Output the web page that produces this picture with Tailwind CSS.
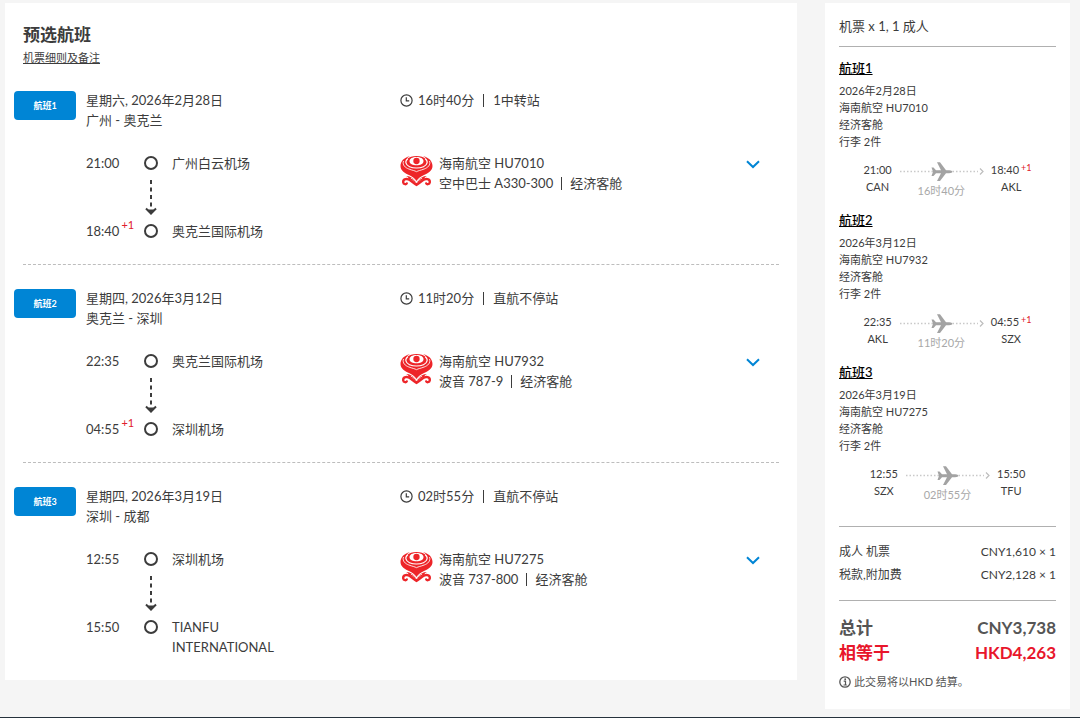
<!DOCTYPE html>
<html lang="zh-CN">
<head>
    <meta charset="UTF-8">
    <meta name="viewport" content="width=device-width, initial-scale=1.0">
    <title>预选航班</title>
    <script src="https://cdn.jsdelivr.net/npm/@tailwindcss/browser@4"></script>
</head>
<body class="min-h-screen flex flex-col bg-[#f5f5f5] font-['Lato','Noto_Sans_CJK_SC',sans-serif] text-[13px] leading-5 text-[#3c3c3c]">

<!-- Shared icons -->
<svg class="hidden" aria-hidden="true">
    <symbol id="clock" viewBox="0 0 13 13">
        <circle cx="6.5" cy="6.5" r="5.6" fill="none" stroke="currentColor" stroke-width="1.2"/>
        <path d="M6.3 3.2V6.9H9.2" fill="none" stroke="currentColor" stroke-width="1.2"/>
    </symbol>
    <symbol id="down-arrow" viewBox="0 0 14 38">
        <path d="M7 2V33" fill="none" stroke="currentColor" stroke-width="2" stroke-dasharray="4 3.5"/>
        <path d="M2 30.5L7 35.5L12 30.5" fill="none" stroke="currentColor" stroke-width="2"/>
        <path d="M4 31.5H10L7 36.5Z" fill="currentColor"/>
    </symbol>
    <symbol id="chevron" viewBox="0 0 14 9">
        <path d="M1 1.2L7 7L13 1.2" fill="none" stroke="currentColor" stroke-width="2"/>
    </symbol>
    <symbol id="hainan" viewBox="0 0 96 93">
        <path fill="#ed2529" d="M28 1C10 5 0 16 0 30C0 45 14 52 27 58C37 63 43 68 48 75C53 68 59 63 69 58C82 52 96 45 96 30C96 16 86 5 68 1C74 4 76 6 76 9C70 3 60 0 48 0C36 0 26 3 20 9C20 6 22 4 28 1Z"/>
        <path fill="#fff" d="M48 3C36 3 27 8 27 15C27 24 37 28 48 28C59 28 69 24 69 15C69 8 60 3 48 3Z"/>
        <path fill="none" stroke="#fff" stroke-width="3.5" d="M22 8C12 15 15 27 27 32C34 35 42 36 48 36C54 36 62 35 69 32C81 27 84 15 74 8"/>
        <path fill="none" stroke="#fff" stroke-width="2.5" d="M9 15C5 27 14 35 25 39C35 43 43 44 48 47C53 44 61 43 71 39C82 35 91 27 87 15"/>
        <circle cx="48" cy="15" r="9.5" fill="#ed2529"/>
        <!-- waves with a curl at each end -->
        <path fill="none" stroke="#ed2529" stroke-width="7" stroke-linecap="round" stroke-linejoin="round" d="M19 82C18 86 9 86 8 79C7 69 20 66 29 73C36 78 41 84 48 87C55 84 60 78 67 73C76 66 89 69 88 79C87 86 78 86 77 82"/>
        <path fill="#ed2529" d="M17 60C27 60 37 65 44 74L48 80L52 74C59 65 69 60 79 60C73 63 71 66 72 70C63 71 57 76 48 88C39 76 33 71 24 70C25 66 23 63 17 60Z"/>
        <path fill="none" stroke="#fff" stroke-width="2.5" d="M31 66C38 69 44 75 48 81C52 75 58 69 65 66"/>
    </symbol>
    <symbol id="plane-line" viewBox="0 0 85 20">
        <path d="M1 9.5H79" fill="none" stroke="#c9c9c9" stroke-width="1.5" stroke-dasharray="1.5 2"/>
        <path d="M81 6.5L84 9.5L81 12.5" fill="none" stroke="#bdbdbd" stroke-width="1.2"/>
        <path fill="#a3a3a3" d="M32.5 5.5H34.5L37 8.2H42L38 0.3H41L47 8.2H50C52.5 8.2 53.3 9 53.3 9.7C53.3 10.4 52.5 11.2 50 11.2H47L41 19H38L42 11.2H37L34.5 13.9H32.5L34 9.7Z"/>
    </symbol>
    <symbol id="info" viewBox="0 0 12 12">
        <circle cx="6" cy="6" r="5.2" fill="none" stroke="currentColor" stroke-width="1.3"/>
        <path d="M4.7 5.2H6.5V9M4.5 9H7.8" fill="none" stroke="currentColor" stroke-width="1.2"/>
        <circle cx="6.2" cy="3.2" r="0.9" fill="currentColor"/>
    </symbol>
</svg>

<div class="flex-1 flex items-start gap-7 pt-[3px] pl-[5px] pr-[10px]">

    <!-- Selected flights -->
    <main class="flex-1 min-w-0 bg-white px-[9px] pt-5">
        <h1 class="px-[9px] text-[17px] leading-6 font-bold">预选航班</h1>
        <p class="mt-[2px] px-[9px] text-[11px] leading-[18px]"><a href="#rules" class="underline">机票细则及备注</a></p>

        <!-- Flight 1 -->
        <section class="flex gap-[10px] py-[23px]">
            <h2 class="mt-px w-[62px] h-[29px] shrink-0 rounded bg-[#0085d5] text-center text-[9px] leading-[29px] font-bold text-white">航班1</h2>
            <div class="flex-1 grid grid-cols-[314fr_388fr] gap-y-[23px]">
                <div>
                    <p>星期六, 2026年2月28日</p>
                    <p>广州 - 奥克兰</p>
                </div>
                <p class="flex items-center self-start">
                    <svg class="w-[13px] h-[13px] mr-[5px]"><use href="#clock"/></svg>
                    <span>16时40分</span>
                    <span class="mx-[9px] h-[13px] border-l border-current"></span>
                    <span>1中转站</span>
                </p>
                <div class="grid grid-cols-[58px_14px_1fr] items-start">
                    <time>21:00</time>
                    <span class="mt-[3px] size-[14px] rounded-full border-2 border-current"></span>
                    <span class="ml-[14px] max-w-32">广州白云机场</span>
                    <svg class="col-start-2 mt-[5px] mb-[5px] w-[14px] h-[38px]"><use href="#down-arrow"/></svg>
                    <p class="col-start-1 flex"><time>18:40</time><span class="ml-[2px] -mt-[2px] text-[11px] leading-none text-[#e0202c]">+1</span></p>
                    <span class="mt-[3px] size-[14px] rounded-full border-2 border-current"></span>
                    <span class="ml-[14px] max-w-32">奥克兰国际机场</span>
                </div>
                <div class="flex items-start pr-[28px]">
                    <svg class="mt-[3px] mr-[6px] w-[33px] h-[31px]"><use href="#hainan"/></svg>
                    <div class="flex-1">
                        <p>海南航空 HU7010</p>
                        <p class="flex items-center"><span>空中巴士 A330-300</span><span class="mx-2 h-[13px] border-l border-current"></span><span>经济客舱</span></p>
                    </div>
                    <button type="button" aria-label="展开航班1详情" class="mt-[7px] text-[#0085d5]"><svg class="w-[14px] h-[9px]"><use href="#chevron"/></svg></button>
                </div>
            </div>
        </section>
        <hr class="mx-[9px] border-dashed border-[#bdbdbd]">

        <!-- Flight 2 -->
        <section class="flex gap-[10px] py-[23px]">
            <h2 class="mt-px w-[62px] h-[29px] shrink-0 rounded bg-[#0085d5] text-center text-[9px] leading-[29px] font-bold text-white">航班2</h2>
            <div class="flex-1 grid grid-cols-[314fr_388fr] gap-y-[23px]">
                <div>
                    <p>星期四, 2026年3月12日</p>
                    <p>奥克兰 - 深圳</p>
                </div>
                <p class="flex items-center self-start">
                    <svg class="w-[13px] h-[13px] mr-[5px]"><use href="#clock"/></svg>
                    <span>11时20分</span>
                    <span class="mx-[9px] h-[13px] border-l border-current"></span>
                    <span>直航不停站</span>
                </p>
                <div class="grid grid-cols-[58px_14px_1fr] items-start">
                    <time>22:35</time>
                    <span class="mt-[3px] size-[14px] rounded-full border-2 border-current"></span>
                    <span class="ml-[14px] max-w-32">奥克兰国际机场</span>
                    <svg class="col-start-2 mt-[5px] mb-[5px] w-[14px] h-[38px]"><use href="#down-arrow"/></svg>
                    <p class="col-start-1 flex"><time>04:55</time><span class="ml-[2px] -mt-[2px] text-[11px] leading-none text-[#e0202c]">+1</span></p>
                    <span class="mt-[3px] size-[14px] rounded-full border-2 border-current"></span>
                    <span class="ml-[14px] max-w-32">深圳机场</span>
                </div>
                <div class="flex items-start pr-[28px]">
                    <svg class="mt-[3px] mr-[6px] w-[33px] h-[31px]"><use href="#hainan"/></svg>
                    <div class="flex-1">
                        <p>海南航空 HU7932</p>
                        <p class="flex items-center"><span>波音 787-9</span><span class="mx-2 h-[13px] border-l border-current"></span><span>经济客舱</span></p>
                    </div>
                    <button type="button" aria-label="展开航班2详情" class="mt-[7px] text-[#0085d5]"><svg class="w-[14px] h-[9px]"><use href="#chevron"/></svg></button>
                </div>
            </div>
        </section>
        <hr class="mx-[9px] border-dashed border-[#bdbdbd]">

        <!-- Flight 3 -->
        <section class="flex gap-[10px] py-[23px]">
            <h2 class="mt-px w-[62px] h-[29px] shrink-0 rounded bg-[#0085d5] text-center text-[9px] leading-[29px] font-bold text-white">航班3</h2>
            <div class="flex-1 grid grid-cols-[314fr_388fr] gap-y-[23px]">
                <div>
                    <p>星期四, 2026年3月19日</p>
                    <p>深圳 - 成都</p>
                </div>
                <p class="flex items-center self-start">
                    <svg class="w-[13px] h-[13px] mr-[5px]"><use href="#clock"/></svg>
                    <span>02时55分</span>
                    <span class="mx-[9px] h-[13px] border-l border-current"></span>
                    <span>直航不停站</span>
                </p>
                <div class="grid grid-cols-[58px_14px_1fr] items-start">
                    <time>12:55</time>
                    <span class="mt-[3px] size-[14px] rounded-full border-2 border-current"></span>
                    <span class="ml-[14px] max-w-32">深圳机场</span>
                    <svg class="col-start-2 mt-[5px] mb-[5px] w-[14px] h-[38px]"><use href="#down-arrow"/></svg>
                    <time class="col-start-1">15:50</time>
                    <span class="mt-[3px] size-[14px] rounded-full border-2 border-current"></span>
                    <span class="ml-[14px] max-w-32">TIANFU INTERNATIONAL</span>
                </div>
                <div class="flex items-start pr-[28px]">
                    <svg class="mt-[3px] mr-[6px] w-[33px] h-[31px]"><use href="#hainan"/></svg>
                    <div class="flex-1">
                        <p>海南航空 HU7275</p>
                        <p class="flex items-center"><span>波音 737-800</span><span class="mx-2 h-[13px] border-l border-current"></span><span>经济客舱</span></p>
                    </div>
                    <button type="button" aria-label="展开航班3详情" class="mt-[7px] text-[#0085d5]"><svg class="w-[14px] h-[9px]"><use href="#chevron"/></svg></button>
                </div>
            </div>
        </section>
    </main>

    <!-- Price summary -->
    <aside class="w-[245px] shrink-0 bg-white px-[14px] pt-[13px] pb-[19px]">
        <p class="pb-[10px] border-b border-[#b0b0b0]">机票 x 1, 1 成人</p>

        <section class="pt-[11px] text-[11px] leading-[17px]">
            <h2 class="mb-1 text-[13px] leading-5 font-medium text-black"><a href="#flight1" class="underline">航班1</a></h2>
            <p>2026年2月28日</p>
            <p>海南航空 HU7010</p>
            <p>经济客舱</p>
            <p>行李 2件</p>
            <div class="mt-[11px] h-[35px] flex justify-center gap-[7px] text-center">
                <p>21:00<br>CAN</p>
                <div class="pt-px text-[#a8a8a8]"><svg class="w-[85px] h-5"><use href="#plane-line"/></svg>16时40分</div>
                <p>18:40<span class="pl-[2px] align-[3px] text-[9px] leading-none text-[#e0202c]">+1</span><br>AKL</p>
            </div>
        </section>

        <section class="pt-[14px] text-[11px] leading-[17px]">
            <h2 class="mb-1 text-[13px] leading-5 font-medium text-black"><a href="#flight2" class="underline">航班2</a></h2>
            <p>2026年3月12日</p>
            <p>海南航空 HU7932</p>
            <p>经济客舱</p>
            <p>行李 2件</p>
            <div class="mt-[11px] h-[35px] flex justify-center gap-[7px] text-center">
                <p>22:35<br>AKL</p>
                <div class="pt-px text-[#a8a8a8]"><svg class="w-[85px] h-5"><use href="#plane-line"/></svg>11时20分</div>
                <p>04:55<span class="pl-[2px] align-[3px] text-[9px] leading-none text-[#e0202c]">+1</span><br>SZX</p>
            </div>
        </section>

        <section class="pt-[14px] text-[11px] leading-[17px]">
            <h2 class="mb-1 text-[13px] leading-5 font-medium text-black"><a href="#flight3" class="underline">航班3</a></h2>
            <p>2026年3月19日</p>
            <p>海南航空 HU7275</p>
            <p>经济客舱</p>
            <p>行李 2件</p>
            <div class="mt-[11px] h-[35px] flex justify-center gap-[7px] text-center">
                <p>12:55<br>SZX</p>
                <div class="pt-px text-[#a8a8a8]"><svg class="w-[85px] h-5"><use href="#plane-line"/></svg>02时55分</div>
                <p>15:50<br>TFU</p>
            </div>
        </section>

        <dl class="mt-[26px] pt-[13px] pb-[14px] border-y border-[#b0b0b0] text-[12px] leading-[23px]">
            <div class="flex justify-between"><dt>成人 机票</dt><dd>CNY1,610 × 1</dd></div>
            <div class="flex justify-between"><dt>税款,附加费</dt><dd>CNY2,128 × 1</dd></div>
        </dl>
        <dl class="pt-[14px] text-[17px] leading-[25px] font-bold text-[#555]">
            <div class="flex justify-between"><dt>总计</dt><dd>CNY3,738</dd></div>
            <div class="flex justify-between text-[#e8162b]"><dt>相等于</dt><dd>HKD4,263</dd></div>
        </dl>
        <p class="mt-[9px] flex items-center gap-[3px] text-[11px] leading-4 text-[#555]">
            <svg class="w-3 h-3"><use href="#info"/></svg>此交易将以HKD 结算。
        </p>
    </aside>
</div>

<footer class="h-px bg-[#26323c]"></footer>
</body>
</html>
